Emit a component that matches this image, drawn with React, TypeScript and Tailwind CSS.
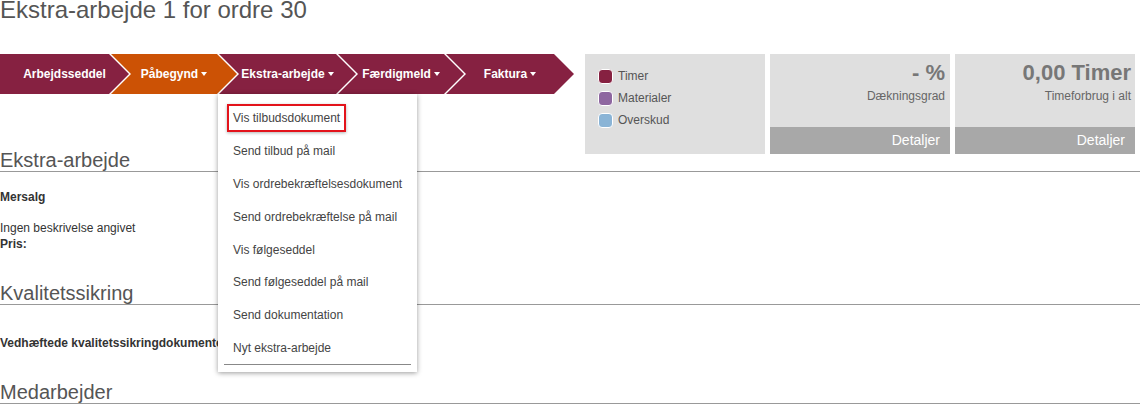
import React from "react";

const Caret = () => (
  <span className="inline-block w-0 h-0 border-x-[3.5px] border-x-transparent border-t-[4px] border-t-white ml-[3px] align-middle" />
);

const menuItems = [
  "Vis tilbudsdokument",
  "Send tilbud på mail",
  "Vis ordrebekræftelsesdokument",
  "Send ordrebekræftelse på mail",
  "Vis følgeseddel",
  "Send følgeseddel på mail",
  "Send dokumentation",
  "Nyt ekstra-arbejde",
];

export default function App() {
  return (
    <div className="w-[1140px] h-[405px] overflow-hidden bg-white font-['Liberation_Sans',Arial,sans-serif] text-[#333]">
      <div className="text-[24px] leading-[20px] text-[#555]">Ekstra-arbejde 1 for ordre 30</div>

      <div className="flex items-start mt-[34px]">
        <div className="relative flex h-[40px] text-[12px] font-bold text-white">
          <div className="w-[129px] h-[40px] flex items-center justify-center pl-[20px] pr-[20px] bg-[#862141] [clip-path:polygon(0_0,calc(100%_-_20px)_0,100%_50%,calc(100%_-_20px)_100%,0_100%)]">
            Arbejdsseddel
          </div>
          <div className="w-[126px] h-[40px] -ml-[18px] flex items-center justify-center pl-[20px] pr-[20px] bg-[#cc5205] [clip-path:polygon(0_0,calc(100%_-_20px)_0,100%_50%,calc(100%_-_20px)_100%,0_100%,20px_50%)]">
            Påbegynd<Caret />
          </div>
          <div className="w-[137px] h-[40px] -ml-[18px] flex items-center justify-center pl-[20px] pr-[20px] bg-[#862141] [clip-path:polygon(0_0,calc(100%_-_20px)_0,100%_50%,calc(100%_-_20px)_100%,0_100%,20px_50%)]">
            Ekstra-arbejde<Caret />
          </div>
          <div className="w-[126px] h-[40px] -ml-[18px] flex items-center justify-center pl-[20px] pr-[20px] bg-[#862141] [clip-path:polygon(0_0,calc(100%_-_20px)_0,100%_50%,calc(100%_-_20px)_100%,0_100%,20px_50%)]">
            Færdigmeld<Caret />
          </div>
          <div className="w-[128px] h-[40px] -ml-[18px] flex items-center justify-center pl-[20px] pr-[20px] bg-[#862141] [clip-path:polygon(0_0,calc(100%_-_20px)_0,100%_50%,calc(100%_-_20px)_100%,0_100%,20px_50%)]">
            Faktura<Caret />
          </div>

          <div className="absolute left-[218px] top-[40px] z-10 w-[199px] bg-white pt-[8px] pb-[7px] font-normal text-[12px] text-[#444] shadow-[0_1px_5px_rgba(0,0,0,0.4)]">
            {menuItems.map((t, i) => (
              <div key={t} className="h-[32.8px] flex items-center pl-[9px]">
                <span
                  className={
                    i === 0
                      ? "border-2 border-[#e3131b] px-[4px] py-[5px] leading-[14px] shadow-[0_1px_3px_rgba(0,0,0,0.3)]"
                      : "border-2 border-transparent px-[4px] py-[5px] leading-[14px]"
                  }
                >
                  {t}
                </span>
              </div>
            ))}
            <div className="mx-[6px] h-px bg-[#888]" />
          </div>
        </div>

        <div className="ml-[11px] w-[180px] h-[100px] bg-[#dfdfdf] pt-[15px] pl-[13px] flex flex-col gap-[8px] text-[12px] text-[#555]">
          {[
            ["Timer", "bg-[#862141]"],
            ["Materialer", "bg-[#8e67a0]"],
            ["Overskud", "bg-[#8ab4d6]"],
          ].map(([label, c]) => (
            <div key={label} className="flex items-center h-[14px] leading-[14px]">
              <span className={`w-[15px] h-[15px] rounded-[4px] border border-white ${c}`} />
              <span className="ml-[5px]">{label}</span>
            </div>
          ))}
        </div>

        <div className="ml-[5px] w-[180px] h-[100px] bg-[#dfdfdf] flex flex-col">
          <div className="flex-1 flex flex-col items-end pr-[5px] pt-[6px]">
            <div className="text-[22px] leading-[26px] font-bold text-[#777]">- %</div>
            <div className="text-[12px] leading-[14px] text-[#666] mt-[3px]">Dækningsgrad</div>
          </div>
          <div className="h-[27px] bg-[#a8a8a8] text-white text-[14px] flex items-center justify-end pr-[10px]">Detaljer</div>
        </div>

        <div className="ml-[5px] w-[180px] h-[100px] bg-[#dfdfdf] flex flex-col">
          <div className="flex-1 flex flex-col items-end pr-[4px] pt-[6px]">
            <div className="text-[22px] leading-[26px] font-bold text-[#777]">0,00 Timer</div>
            <div className="text-[12px] leading-[14px] text-[#666] mt-[3px]">Timeforbrug i alt</div>
          </div>
          <div className="h-[27px] bg-[#a8a8a8] text-white text-[14px] flex items-center justify-end pr-[10px]">Detaljer</div>
        </div>
      </div>

      <div className="-mt-[1px] text-[20px] leading-[14px] pb-[4px] border-b border-[#999] text-[#555]">Ekstra-arbejde</div>
      <div className="mt-[17px] text-[12px] leading-[16px] font-bold">Mersalg</div>
      <div className="mt-[15px] text-[12px] leading-[16px]">Ingen beskrivelse angivet</div>
      <div className="text-[12px] leading-[16px] font-bold">Pris:</div>

      <div className="mt-[34px] text-[20px] leading-[14px] pb-[4px] border-b border-[#999] text-[#555]">Kvalitetssikring</div>
      <div className="mt-[30px] text-[12px] leading-[16px] font-bold">Vedhæftede kvalitetssikringdokumenter</div>

      <div className="mt-[34px] text-[20px] leading-[14px] pb-[4px] border-b border-[#999] text-[#555]">Medarbejder</div>
    </div>
  );
}
